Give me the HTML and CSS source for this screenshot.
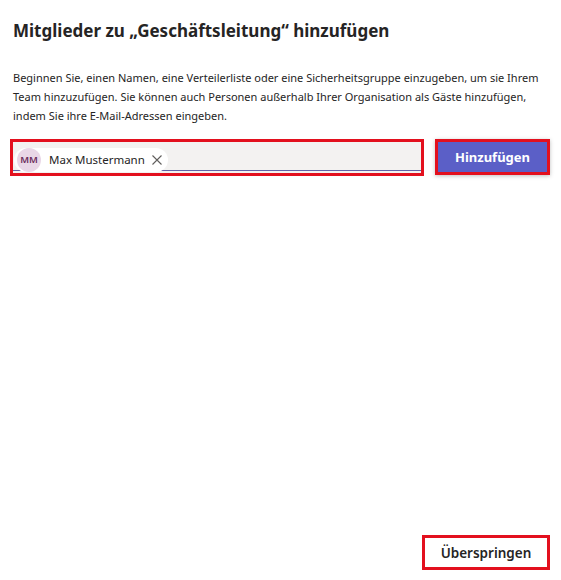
FILE: index.html
```html
<!DOCTYPE html>
<html lang="de">
<head>
    <meta charset="UTF-8">
    <meta name="viewport" content="width=device-width, initial-scale=1.0">
    <title>Mitglieder hinzufügen</title>
    <link rel="stylesheet" href="styles.css">
</head>
<body>

    <div class="dialog">
        <h2 class="dialog-title">Mitglieder zu „Geschäftsleitung“ hinzufügen</h2>
        <p class="dialog-text">Beginnen Sie, einen Namen, eine Verteilerliste oder eine Sicherheitsgruppe einzugeben, um sie Ihrem Team hinzuzufügen. Sie können auch Personen außerhalb Ihrer Organisation als Gäste hinzufügen, indem Sie ihre E-Mail-Adressen eingeben.</p>

        <!-- Eingabe + Button -->
        <div class="add-row">
            <div class="people-picker">
                <div class="chip">
                    <span class="avatar">MM</span>
                    <span class="chip-name">Max Mustermann</span>
                    <svg class="chip-close" width="10" height="10" viewBox="0 0 10 10">
                        <path d="M0.5 0.5 L9.5 9.5 M9.5 0.5 L0.5 9.5" stroke="#605e5c" stroke-width="1.1" fill="none"/>
                    </svg>
                </div>
            </div>
            <button class="btn-primary">Hinzufügen</button>
        </div>

        <div class="dialog-footer">
            <button class="btn-secondary">Überspringen</button>
        </div>
    </div>

</body>
</html>
```

FILE: styles.css
```css
body {
    margin: 0;
    font-family: "Noto Sans", "Open Sans", Arial, sans-serif;
    background: #ffffff;
    color: #252424;
}
.dialog {
    height: 580px;
    box-sizing: border-box;
    padding: 19px 11px 10px 10px;
    display: flex;
    flex-direction: column;
}
.dialog-title {
    margin: 0 0 0 3px;
    font-size: 17px;
    font-weight: 700;
    line-height: 24px;
}
.dialog-text {
    margin: 25px 0 0 3px;
    font-size: 11px;
    line-height: 19px;
    color: #252424;
}
.add-row {
    display: flex;
    margin-top: 14px;
    gap: 11px;
}
.people-picker {
    width: 414px;
    height: 37px;
    box-sizing: border-box;
    border: 3px solid #e3101e;
    background: #f3f2f1;
    box-shadow: inset 0 -2px 0 #f3f2f1, inset 0 -3px 0 #6264a7;
    padding: 4px 0 0 1px;
}
.chip {
    display: inline-flex;
    align-items: center;
    height: 24px;
    background: #ffffff;
    border-radius: 12px;
    padding-right: 6px;
}
.avatar {
    width: 24px;
    height: 24px;
    border-radius: 50%;
    background: #e9d7e7;
    color: #6b2d5c;
    font-size: 9.5px;
    font-weight: 600;
    display: flex;
    align-items: center;
    justify-content: center;
    margin-left: 3px;
}
.chip-name {
    font-size: 11.5px;
    margin: 0 7px 0 8px;
    color: #252424;
}
.chip-close {
    display: block;
}
.btn-primary {
    width: 115px;
    height: 36px;
    box-sizing: border-box;
    border: 3px solid #e3101e;
    background: #5b5fc7;
    color: white;
    font-family: inherit;
    font-size: 13px;
    font-weight: 700;
    box-shadow: 0 1px 4px rgba(0, 0, 0, 0.25);
    cursor: pointer;
}
.dialog-footer {
    margin-top: auto;
    display: flex;
    justify-content: flex-end;
}
.btn-secondary {
    width: 128px;
    height: 35px;
    box-sizing: border-box;
    border: 3px solid #e3101e;
    background: #ffffff;
    color: #252424;
    font-family: inherit;
    font-size: 13.5px;
    font-weight: 600;
    cursor: pointer;
}
```
